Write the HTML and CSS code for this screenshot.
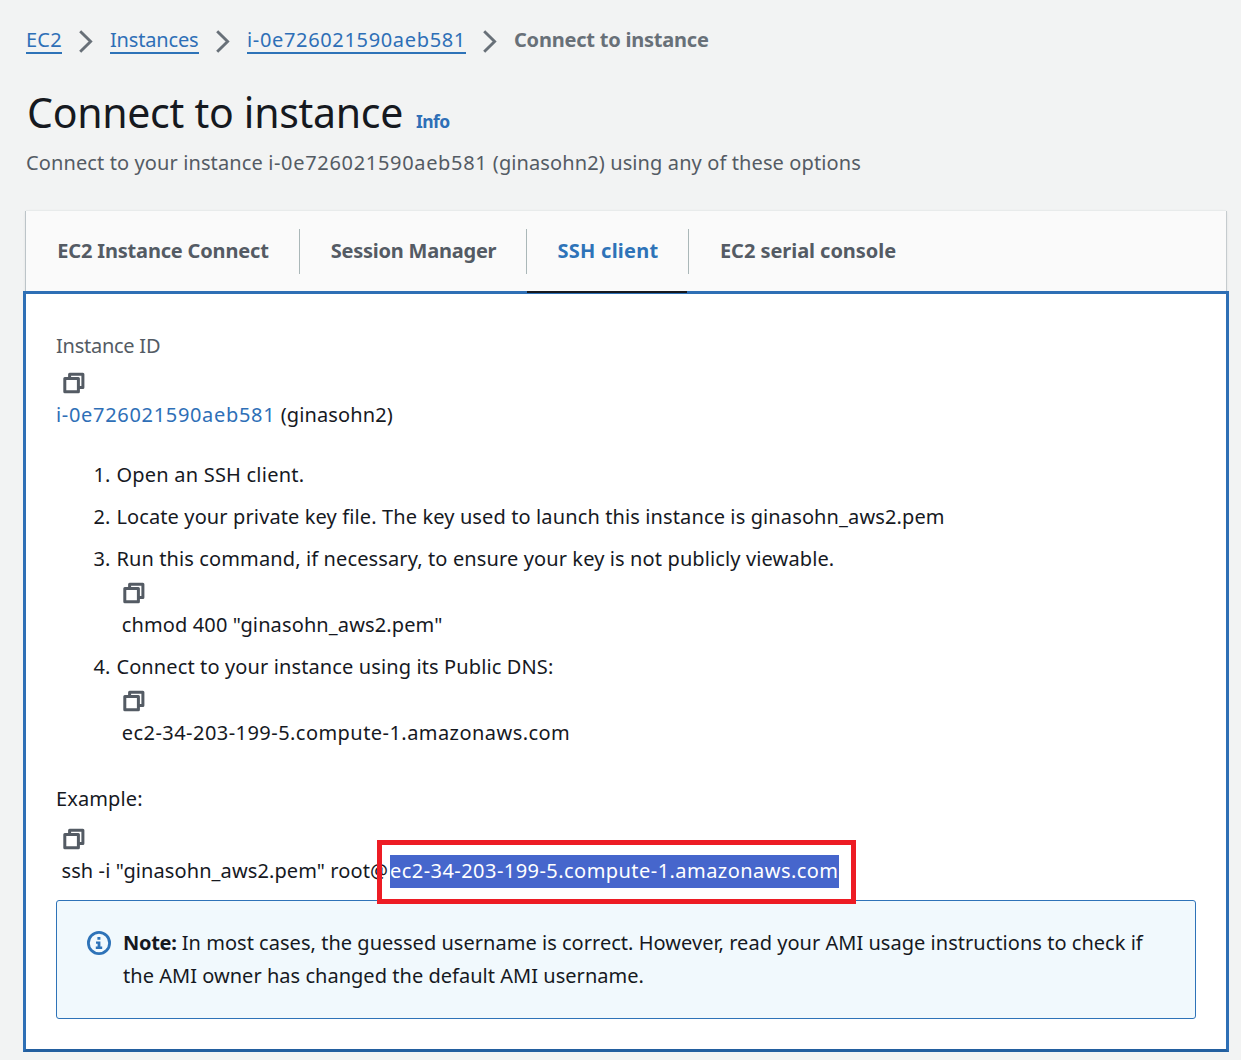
FILE: index.html
```html
<!DOCTYPE html>
<html lang="en">
<head>
<meta charset="utf-8">
<title>Connect to instance</title>
<link rel="stylesheet" href="styles.css">
</head>
<body>
<svg class="defs" width="0" height="0">
  <symbol id="copy" viewBox="0 0 22 22">
    <g fill="none" stroke="currentColor" stroke-width="3" stroke-linejoin="round">
      <rect x="1.8" y="6.4" width="13.6" height="13.4"/>
      <path d="M6.6 6V2.2H19.9V15.4H16"/>
    </g>
  </symbol>
  <symbol id="chevron" viewBox="0 0 14 24">
    <path d="M1.2 1.2L11.6 11.5L1.2 21.8" fill="none" stroke="currentColor" stroke-width="2.9"/>
  </symbol>
</svg>

<nav class="breadcrumbs">
  <a class="crumb crumb-root">EC2</a>
  <svg class="chevron"><use href="#chevron"/></svg>
  <a class="crumb crumb-list">Instances</a>
  <svg class="chevron"><use href="#chevron"/></svg>
  <a class="crumb id">i-0e726021590aeb581</a>
  <svg class="chevron"><use href="#chevron"/></svg>
  <span class="current">Connect to instance</span>
</nav>

<header class="page-header">
  <div class="title-row"><h1>Connect to instance</h1><a class="info">Info</a></div>
  <p>Connect to your instance <span class="id">i-0e726021590aeb581</span> (ginasohn2) using any of these options</p>
</header>

<div class="tabs">
  <div class="tab tab-connect">EC2 Instance Connect</div>
  <div class="tab tab-session">Session Manager</div>
  <div class="tab tab-ssh active">SSH client</div>
  <div class="tab tab-serial">EC2 serial console</div>
</div>

<main class="panel">
  <div class="label">Instance ID</div>
  <svg class="copy copy-id"><use href="#copy"/></svg>
  <div><a class="id">i-0e726021590aeb581</a> (ginasohn2)</div>

  <ol class="steps">
    <li><span class="open">Open an SSH client.</span></li>
    <li>Locate your private key file. The key used to launch this instance is ginasohn_aws2.pem</li>
    <li>Run this command, if necessary, to ensure your key is not publicly viewable.
      <svg class="copy"><use href="#copy"/></svg>
      <div class="command">chmod 400 "ginasohn_aws2.pem"</div>
    </li>
    <li>Connect to your instance using its Public DNS:
      <svg class="copy"><use href="#copy"/></svg>
      <div class="command dns">ec2-34-203-199-5.compute-1.amazonaws.com</div>
    </li>
  </ol>

  <div class="example">Example:</div>
  <svg class="copy copy-example"><use href="#copy"/></svg>
  <div class="ssh"><span class="ssh-prefix">ssh -i "ginasohn_aws2.pem" root@</span><span class="selected dns">ec2-34-203-199-5.compute-1.amazonaws.com<span class="marker-box"></span></span></div>

  <div class="note">
    <svg class="note-icon" viewBox="0 0 24 24">
      <circle cx="12" cy="12" r="10.6" fill="none" stroke="currentColor" stroke-width="2.8"/>
      <path fill="currentColor" d="M10.4 6H13.4V8.8H10.4ZM9 10.4H13.4V15.4H15.2V18H8.8V15.4H10.6V12.8H9Z"/>
    </svg>
    <p><strong>Note:</strong> In most cases, the guessed username is correct. However, read your AMI usage instructions to check if<br>the AMI owner has changed the default AMI username.</p>
  </div>
</main>
</body>
</html>
```
FILE: styles.css
```css
* { box-sizing: border-box; }
body {
  margin: 0;
  height: 1060px;
  padding-top: 25px;
  overflow: hidden;
  background: #f2f3f3;
  color: #16191f;
  font: 20px/33px "Noto Sans", "Open Sans", sans-serif;
  letter-spacing: 0.12px;
}
.defs { position: absolute; }
p, h1, ol { margin: 0; padding: 0; }
a { color: #2e6fb7; }
.id { letter-spacing: 0.68px; }
.dns { letter-spacing: 0.45px; }

.breadcrumbs {
  display: flex;
  align-items: flex-start;
  height: 32px;
  padding-left: 26px;
  line-height: 29px;
}
.crumb { height: 29px; border-bottom: 2px solid #2e73b8; }
.crumb-root { width: 36px; letter-spacing: 0.25px; }
.crumb-list { width: 89px; letter-spacing: -0.17px; }
.crumb.id { width: 219px; letter-spacing: 0.66px; }
.chevron { width: 14px; height: 24px; margin: 5px 17px 0; color: #687078; }
.current { color: #687078; font-weight: 700; letter-spacing: -0.22px; }

.page-header { padding-left: 26px; }
.page-header p { color: #545b64; line-height: 30px; letter-spacing: 0.11px; }
.title-row { display: flex; align-items: baseline; height: 91px; padding-top: 25px; }
h1 { width: 390px; padding-left: 1px; font-size: 41px; font-weight: 400; line-height: 61px; letter-spacing: -0.28px; }
.info { font-size: 17.5px; font-weight: 700; letter-spacing: -0.6px; }

.tabs {
  display: flex;
  width: 1200px;
  height: 80px;
  margin: 33px 0 0 26px;
  background: #fafafa;
  box-shadow: -1px 0 #bcc4c8, 1px 0 #c5cbce, 0 -1px #e8ebeb, 0 1px 3px rgba(0, 28, 36, 0.15);
}
.tab {
  position: relative;
  display: flex;
  justify-content: center;
  align-items: center;
  padding-bottom: 2px;
  color: #545b64;
  font-weight: 700;
  letter-spacing: -0.18px;
}
.tab:not(:last-child)::before {
  content: "";
  position: absolute;
  top: 18px;
  right: 0;
  width: 1px;
  height: 45px;
  background: #aab7b8;
}
.tab-connect { width: 274px; }
.tab-session { width: 227px; letter-spacing: -0.23px; }
.tab-ssh { width: 162px; letter-spacing: 0.25px; }
.tab-serial { width: 238px; letter-spacing: -0.05px; }
.tab.active { color: #2e73b8; }
.tab.active::after {
  content: "";
  position: absolute;
  z-index: 1;
  left: 0;
  bottom: -2px;
  width: 160px;
  height: 2px;
  background: #16191f;
}

.panel {
  width: 1206px;
  height: 761px;
  margin-left: 23px;
  padding: 35px 30px 0;
  background: #fff;
  border: 3px solid #2e6fb5;
  border-bottom-color: #235f9f;
}
.label { color: #545b64; letter-spacing: -0.25px; }
.copy { display: block; width: 22px; height: 22px; margin: 7px 0 4px 7px; color: #545b64; }
.copy-id { margin-top: 10px; }
.steps { margin-top: 27px; padding-left: 60.4px; list-style: none; counter-reset: step; }
.steps li { counter-increment: step; margin-bottom: 9px; }
.steps .copy { margin-left: 6.6px; }
.steps li::before {
  content: counter(step) ".";
  float: left;
  width: 23px;
  margin-left: -23px;
}
.open { letter-spacing: 0.22px; }
.command { padding-left: 5.4px; }
.example { margin-top: 33px; }
.copy-example { margin: 13px 0 5px 7px; }
.ssh { display: flex; padding-left: 5px; line-height: 32px; white-space: nowrap; }
.ssh-prefix { width: 329px; padding-left: 0.5px; letter-spacing: 0.1px; }
.selected {
  position: relative;
  width: 449px;
  height: 33px;
  background: #4666cc;
  color: #fff;
}
.marker-box {
  position: absolute;
  inset: -15px -17px -16px -13px;
  border: 5px solid #ed1c24;
}
.note {
  display: flex;
  gap: 12px;
  height: 119px;
  margin-top: 12px;
  padding: 25px 0 0 30px;
  background: #f1f9fd;
  border: 1px solid #2e73b8;
  border-radius: 3px;
}
.note-icon { width: 24px; height: 24px; margin-top: 5px; color: #2e73b8; }
.note p { letter-spacing: 0.03px; white-space: nowrap; }
.note strong { letter-spacing: -0.3px; }
```
